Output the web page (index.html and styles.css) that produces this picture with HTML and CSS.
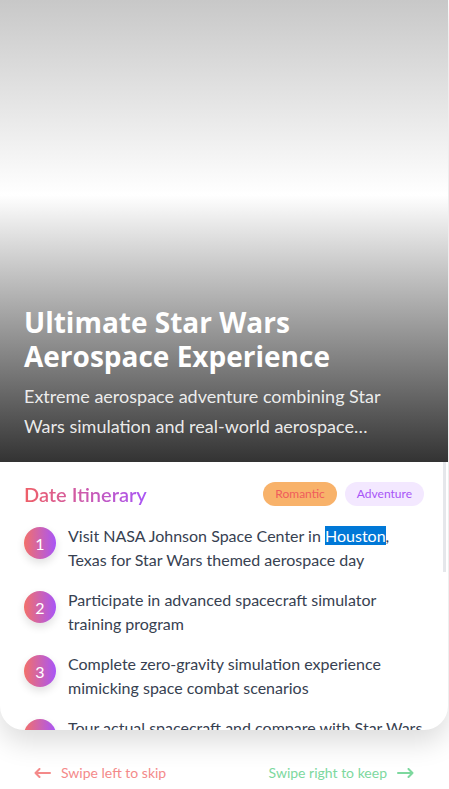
FILE: index.html
```html
<!DOCTYPE html>
<html lang="en">
<head>
<meta charset="utf-8">
<title>Date Card</title>
<link rel="stylesheet" href="styles.css">
</head>
<body>
<div class="card">
  <div class="hero">
    <h1 class="hero-title">Ultimate Star Wars Aerospace Experience</h1>
    <p class="hero-desc">Extreme aerospace adventure combining Star Wars simulation and real-world aerospace engineering exploration for true fans.</p>
  </div>
  <div class="content">
    <div class="content-head">
      <h2 class="section-title">Date Itinerary</h2>
      <div class="tags">
        <span class="tag tag-romantic">Romantic</span>
        <span class="tag tag-adventure">Adventure</span>
      </div>
    </div>
    <ol class="steps">
      <li class="step"><span class="num">1</span><span class="step-text">Visit NASA Johnson Space Center in <span class="sel">Houston</span>, Texas for Star Wars themed aerospace day</span></li>
      <li class="step"><span class="num">2</span><span class="step-text">Participate in advanced spacecraft simulator training program</span></li>
      <li class="step"><span class="num">3</span><span class="step-text">Complete zero-gravity simulation experience mimicking space combat scenarios</span></li>
      <li class="step"><span class="num">4</span><span class="step-text">Tour actual spacecraft and compare with Star Wars vehicle designs</span></li>
      <li class="step"><span class="num">5</span><span class="step-text">Meet astronauts and discuss the science behind hyperspace travel</span></li>
      <li class="step"><span class="num">6</span><span class="step-text">Build and launch model rockets styled after X-wing fighters</span></li>
      <li class="step"><span class="num">7</span><span class="step-text">End the evening with a stargazing session under the Texas sky</span></li>
    </ol>
  </div>
  <div class="scroll-thumb"></div>
</div>
<div class="hints">
  <div class="hint hint-skip">
    <svg class="arrow" width="17" height="10" viewBox="0 0 17 10"><path d="M16 5H1.5M5.5 1L1.5 5l4 4" fill="none" stroke="currentColor" stroke-width="2" stroke-linecap="round" stroke-linejoin="round"/></svg>
    <span>Swipe left to skip</span>
  </div>
  <div class="hint hint-keep">
    <span>Swipe right to keep</span>
    <svg class="arrow" width="17" height="10" viewBox="0 0 17 10"><path d="M1 5h14.5M11.5 1l4 4-4 4" fill="none" stroke="currentColor" stroke-width="2" stroke-linecap="round" stroke-linejoin="round"/></svg>
  </div>
</div>
</body>
</html>
```
FILE: styles.css
```css
* {
  box-sizing: border-box;
  margin: 0;
  padding: 0;
}

html, body {
  width: 449px;
  height: 789px;
  overflow: hidden;
  background: #ffffff;
}

body {
  font-family: "Lato", "Open Sans", sans-serif;
}

.card {
  position: relative;
  width: 448px;
  height: 730px;
  display: flex;
  flex-direction: column;
  background: #ffffff;
  border-radius: 0 0 24px 24px;
  overflow: hidden;
  box-shadow: 0 12px 28px rgba(0, 0, 0, 0.14);
}

.hero {
  flex: none;
  height: 462px;
  display: flex;
  flex-direction: column;
  justify-content: flex-end;
  padding: 0 28px 20px 24px;
  color: #ffffff;
  background: linear-gradient(to bottom, #c8c8c8 0px, #ffffff 195px, #333333 462px);
}

.hero-title {
  font-family: "Open Sans", "Lato", sans-serif;
  font-size: 28px;
  font-weight: 700;
  line-height: 34px;
}

.hero-desc {
  margin-top: 8px;
  font-size: 18px;
  line-height: 30.6px;
  color: rgba(255, 255, 255, 0.9);
  display: -webkit-box;
  -webkit-line-clamp: 2;
  -webkit-box-orient: vertical;
  overflow: hidden;
}

.content {
  flex: 1;
  min-height: 0;
  overflow: hidden;
  padding: 18px 24px 24px 24px;
}

.scroll-thumb {
  position: absolute;
  right: 2px;
  top: 462px;
  width: 3px;
  height: 110px;
  background: #e5e7eb;
}

.content-head {
  display: flex;
  justify-content: space-between;
  align-items: center;
  margin-bottom: 16px;
}

.section-title {
  display: inline-block;
  font-size: 20px;
  font-weight: 600;
  line-height: 28px;
  background: linear-gradient(to right, #ef5f67, #a855f7);
  -webkit-background-clip: text;
  background-clip: text;
  color: transparent;
}

.tags {
  display: flex;
  gap: 8px;
}

.tag {
  font-size: 12px;
  line-height: 16px;
  padding: 4px 12px;
  border-radius: 999px;
}

.tag-romantic {
  background: #f8b26a;
  color: #f05c5c;
}

.tag-adventure {
  background: #f3e8ff;
  color: #a855f7;
}

.steps {
  list-style: none;
  display: flex;
  flex-direction: column;
  gap: 16px;
}

.step {
  display: flex;
  align-items: flex-start;
  gap: 12px;
}

.num {
  flex: none;
  width: 32px;
  height: 32px;
  margin-top: 3px;
  border-radius: 50%;
  display: flex;
  align-items: center;
  justify-content: center;
  color: #ffffff;
  font-size: 16px;
  background: linear-gradient(to right, #f2706a, #a855f7);
  box-shadow: 0 4px 8px rgba(0, 0, 0, 0.12);
}

.step-text {
  font-size: 16px;
  line-height: 24px;
  color: #374151;
}

.sel {
  background: #0078d7;
  color: #ffffff;
}

.hints {
  display: flex;
  justify-content: space-between;
  align-items: center;
  height: 20px;
  margin-top: 33px;
  padding: 0 35px 0 34px;
  font-size: 14px;
  line-height: 20px;
}

.hint {
  display: flex;
  align-items: center;
  gap: 10px;
}

.hint-skip {
  color: #f48a8a;
}

.hint-keep {
  color: #7dd89e;
}

.arrow {
  display: block;
}
```
